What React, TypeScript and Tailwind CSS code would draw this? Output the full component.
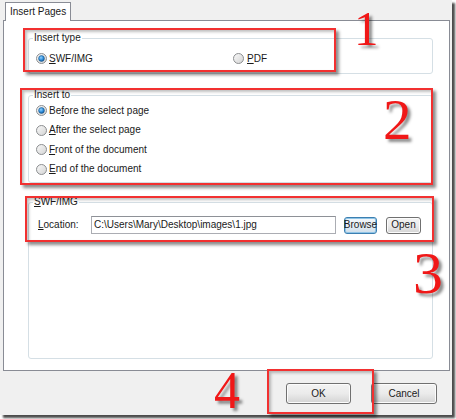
import React, { useId } from 'react';

// --- Bouton radio façon Windows 7 ---
const Radio = ({ checked = false }: { checked?: boolean }) => {
    const id = useId();
    return (
        <svg width="11" height="11" viewBox="0 0 11 11" className="shrink-0">
            <defs>
                <linearGradient id={`${id}-f`} x1="0" y1="0" x2="1" y2="1">
                    <stop offset="0" stopColor="#fafafa" />
                    <stop offset="1" stopColor="#d2d2d2" />
                </linearGradient>
                <radialGradient id={`${id}-d`} cx="0.4" cy="0.35" r="0.7">
                    <stop offset="0" stopColor="#8fd0ff" />
                    <stop offset="0.6" stopColor="#2c8ad8" />
                    <stop offset="1" stopColor="#0f4f8f" />
                </radialGradient>
            </defs>
            <circle cx="5.5" cy="5.5" r="5" fill={`url(#${id}-f)`} stroke="#8c8e90" strokeWidth="1" />
            {checked && <circle cx="5.5" cy="5.5" r="2.9" fill={`url(#${id}-d)`} stroke="#1d5a8f" strokeWidth="0.6" />}
        </svg>
    );
};

// --- Libellé avec lettre de raccourci soulignée ---
const Label = ({ before = '', hot, after }: { before?: string; hot: string; after: string }) => (
    <span className="whitespace-nowrap">
        {before}
        <span className="underline underline-offset-[1px]">{hot}</span>
        {after}
    </span>
);

const RadioRow = ({ checked, children }: { checked?: boolean; children: React.ReactNode }) => (
    <div className="flex items-center gap-[1px] h-[19.5px]">
        <Radio checked={checked} />
        <span className="ml-[1px]">{children}</span>
    </div>
);

const WinButton = ({ label, className = '' }: { label: string; className?: string }) => (
    <div
        className={
            'flex items-center justify-center rounded-[3px] border border-[#707070] bg-gradient-to-b from-[#f3f3f3] via-[#ebebeb] to-[#d3d3d3] shadow-[inset_0_0_0_1px_#fcfcfc] ' +
            className
        }
    >
        {label}
    </div>
);

// Cadres rouges d'annotation
const RedBox = ({ className }: { className: string }) => (
    <div
        className={
            'absolute border-2 border-[#f23030] shadow-[inset_2px_2px_3px_rgba(0,0,0,0.25),3px_3px_3px_rgba(0,0,0,0.45)] ' +
            className
        }
    />
);

const Num = ({ n, className }: { n: string; className: string }) => (
    <div
        className={
            "absolute leading-none text-[#f01818] font-['Liberation_Serif',serif] [text-shadow:3px_3px_3px_rgba(0,0,0,0.45)] " +
            className
        }
    >
        {n}
    </div>
);

export default function App() {
    return (
        <div className="relative w-[456px] h-[419px] bg-white text-[10px] leading-[12px] text-[#1a1a1a] font-['Liberation_Sans',Arial,sans-serif]">
            {/* Fenêtre */}
            <div className="w-[452px] h-[415px] bg-[#f0f0f0] flex flex-col shadow-[3px_3px_2px_rgba(0,0,0,0.7)]">
                {/* Onglets */}
                <div className="h-[20px] pl-[5px] flex items-start">
                    <div className="relative z-10 mt-[2px] h-[19px] w-[66px] border border-b-0 border-[#898c95] bg-white pl-[4px] pt-[3px]">
                        Insert Pages
                    </div>
                </div>

                {/* Panneau */}
                <div className="ml-[3px] w-[447px] h-[351px] border border-[#898c95] bg-white pt-[11px] pl-[24px]">
                    {/* Insert type */}
                    <fieldset className="w-[405px] border border-[#d5dfe5] rounded-[3px] pl-[7px] pb-[8px]">
                        <legend className="-ml-[3px] px-[1px]">Insert type</legend>
                        <div className="mt-[8px] flex items-center h-[13px]">
                            <div className="w-[197px] flex items-center">
                                <Radio checked />
                                <span className="ml-[2px]">
                                    <Label hot="S" after="WF/IMG" />
                                </span>
                            </div>
                            <div className="flex items-center">
                                <Radio />
                                <span className="ml-[3px]">
                                    <Label hot="P" after="DF" />
                                </span>
                            </div>
                        </div>
                    </fieldset>

                    {/* Insert to */}
                    <fieldset className="mt-[15px] w-[405px] border border-[#d5dfe5] rounded-[3px] pl-[7px] pb-[3px]">
                        <legend className="-ml-[3px] px-[1px]">Insert to</legend>
                        <div className="flex flex-col">
                            <RadioRow checked>
                                <Label before="Be" hot="f" after="ore the select page" />
                            </RadioRow>
                            <RadioRow>
                                <Label hot="A" after="fter the select page" />
                            </RadioRow>
                            <RadioRow>
                                <Label hot="F" after="ront of the document" />
                            </RadioRow>
                            <RadioRow>
                                <Label hot="E" after="nd of the document" />
                            </RadioRow>
                        </div>
                    </fieldset>

                    {/* SWF/IMG */}
                    <fieldset className="mt-[13px] w-[405px] h-[163px] border border-[#d5dfe5] rounded-[3px] pl-[9px]">
                        <legend className="-ml-[5px] px-[1px]">
                            <Label hot="S" after="WF/IMG" />
                        </legend>
                        <div className="mt-[8px] flex items-center">
                            <div className="w-[53px]">
                                <Label hot="L" after="ocation:" />
                            </div>
                            <div className="w-[245px] h-[18px] border border-[#abadb3] border-t-[#8e9197] bg-white pl-[2px] flex items-center">
                                C:\Users\Mary\Desktop\images\1.jpg
                            </div>
                            <div className="ml-[8px] w-[33px] h-[17px] rounded-[3px] border border-[#3c7fb1] bg-gradient-to-b from-[#f4f8fb] via-[#e6eef5] to-[#cfdeea] shadow-[inset_0_0_0_1px_#8fc4e6] flex items-center justify-center">
                                Browse
                            </div>
                            <WinButton label="Open" className="ml-[9px] w-[35px] h-[17px]" />
                        </div>
                    </fieldset>
                </div>

                {/* Barre de boutons */}
                <div className="flex-1 flex items-start justify-end pt-[12px] pr-[15px] gap-[20px]">
                    <WinButton label="OK" className="w-[65px] h-[21px]" />
                    <WinButton label="Cancel" className="w-[66px] h-[21px]" />
                </div>
            </div>

            {/* Annotations */}
            <RedBox className="left-[23px] top-[28px] w-[313px] h-[44px]" />
            <RedBox className="left-[20px] top-[88px] w-[413px] h-[97px]" />
            <RedBox className="left-[25px] top-[196px] w-[409px] h-[46px]" />
            <RedBox className="left-[267px] top-[369px] w-[107px] h-[45px]" />

            <Num n="1" className="left-[354px] top-[4px] text-[49px]" />
            <Num n="2" className="left-[383px] top-[91px] text-[57px]" />
            <Num n="3" className="left-[413px] top-[243px] text-[60px]" />
            <Num n="4" className="left-[214px] top-[365px] text-[52px]" />
        </div>
    );
}
